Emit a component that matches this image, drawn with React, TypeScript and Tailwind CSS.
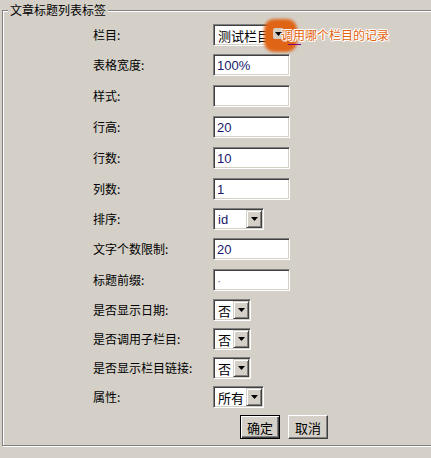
import React from "react";

const cjk = "font-['Noto_Sans_CJK_SC',sans-serif]";

function TextBox({ value, dot }: { value?: string; dot?: boolean }) {
  return (
    <div className="w-[77px] h-[22px] bg-white border border-t-[#808080] border-l-[#808080] border-r-white border-b-white shadow-[inset_1px_1px_0_#404040,inset_-1px_-1px_0_#d4d0c8] pl-[3px] flex items-center text-[13px] leading-none text-[#18186a] font-['Liberation_Sans',sans-serif]">
      {dot ? <span className="text-[#8080a0]">·</span> : value}
    </div>
  );
}

function Arrow() {
  return (
    <svg width="7" height="4" viewBox="0 0 7 4">
      <polygon points="0,0 7,0 3.5,4" fill="#000" />
    </svg>
  );
}

function DropBtn() {
  return (
    <div className="w-[16px] h-full shrink-0 bg-[#d4d0c8] border border-t-[#d4d0c8] border-l-[#d4d0c8] border-r-[#404040] border-b-[#404040] shadow-[inset_1px_1px_0_#fff,inset_-1px_-1px_0_#808080] flex items-center justify-center">
      <Arrow />
    </div>
  );
}

function Select({ widthCls, text, latin }: { widthCls: string; text: string; latin?: boolean }) {
  return (
    <div
      className={`${widthCls} h-[22px] flex p-[1px] bg-white border border-t-[#808080] border-l-[#808080] border-r-white border-b-white shadow-[inset_1px_1px_0_#404040,inset_-1px_-1px_0_#d4d0c8]`}
    >
      <div
        className={`flex-1 overflow-hidden whitespace-nowrap pl-[3px] flex items-center text-[13px] leading-none ${
          latin ? "font-['Liberation_Sans',sans-serif] text-[#18186a]" : `${cjk} text-black`
        }`}
      >
        {text}
      </div>
      <DropBtn />
    </div>
  );
}

function Row({ label, mt, children }: { label: string; mt: string; children: React.ReactNode }) {
  return (
    <div className={`flex items-center h-[22px] ${mt}`}>
      <div className={`w-[120px] shrink-0 text-[12px] leading-none text-black ${cjk}`}>{label}</div>
      <div className="relative">{children}</div>
    </div>
  );
}

export default function App() {
  return (
    <div className="w-full h-[458px] overflow-hidden bg-[#d4d0c8] pt-[10px] pl-[2px]">
      <div className="relative w-[440px] h-[436px] border border-[#808080] shadow-[inset_1px_1px_0_#fff,1px_1px_0_#fff] pt-[13px] pl-[90px]">
        <span
          className={`absolute left-[5px] top-[-8px] px-[2px] bg-[#d4d0c8] text-[12px] leading-[14px] text-black ${cjk}`}
        >
          文章标题列表标签
        </span>

        <Row label="栏目:" mt="mt-0">
          <Select widthCls="w-[73px]" text="测试栏目" />
          <div className="absolute left-[51px] top-[-5px] w-[33px] h-[33px] rounded-[10px] bg-[#df6416] blur-[1.5px]" />
          <div className="absolute left-[60px] top-[4px] w-[10px] h-[11px] rounded-[2px] bg-[#d6cbbf] flex items-center justify-center">
            <Arrow />
          </div>
          <div className="absolute left-[75px] top-[20px] w-[13px] h-[1px] bg-[#800080]" />
          <div
            className={`absolute left-[68px] top-0 h-[22px] flex items-center whitespace-nowrap text-[12px] leading-none text-[#e4620c] ${cjk} [text-shadow:1px_0_0_#fff,-1px_0_0_#fff,0_1px_0_#fff,0_-1px_0_#fff,1px_1px_0_#fff,-1px_-1px_0_#fff]`}
          >
            调用哪个栏目的记录
          </div>
        </Row>
        <Row label="表格宽度:" mt="mt-[8px]">
          <TextBox value="100%" />
        </Row>
        <Row label="样式:" mt="mt-[9px]">
          <TextBox value="" />
        </Row>
        <Row label="行高:" mt="mt-[9px]">
          <TextBox value="20" />
        </Row>
        <Row label="行数:" mt="mt-[9px]">
          <TextBox value="10" />
        </Row>
        <Row label="列数:" mt="mt-[9px]">
          <TextBox value="1" />
        </Row>
        <Row label="排序:" mt="mt-[8px]">
          <Select widthCls="w-[51px]" text="id" latin />
        </Row>
        <Row label="文字个数限制:" mt="mt-[8px]">
          <TextBox value="20" />
        </Row>
        <Row label="标题前缀:" mt="mt-[9px]">
          <TextBox dot />
        </Row>
        <Row label="是否显示日期:" mt="mt-[8px]">
          <Select widthCls="w-[38px]" text="否" />
        </Row>
        <Row label="是否调用子栏目:" mt="mt-[7px]">
          <Select widthCls="w-[38px]" text="否" />
        </Row>
        <Row label="是否显示栏目链接:" mt="mt-[7px]">
          <Select widthCls="w-[38px]" text="否" />
        </Row>
        <Row label="属性:" mt="mt-[7px]">
          <Select widthCls="w-[51px]" text="所有" />
        </Row>

        <div className="flex gap-[8px] mt-[7px] pl-[147px]">
          <div
            className={`w-[40px] h-[24px] bg-[#d4d0c8] border border-black shadow-[inset_1px_1px_0_#fff,inset_-1px_-1px_0_#404040,inset_-2px_-2px_0_#808080] flex items-center justify-center text-[13px] leading-none text-black ${cjk}`}
          >
            确定
          </div>
          <div
            className={`w-[40px] h-[24px] bg-[#d4d0c8] border border-t-white border-l-white border-r-[#404040] border-b-[#404040] shadow-[inset_-1px_-1px_0_#808080] flex items-center justify-center text-[13px] leading-none text-black ${cjk}`}
          >
            取消
          </div>
        </div>
      </div>
    </div>
  );
}
